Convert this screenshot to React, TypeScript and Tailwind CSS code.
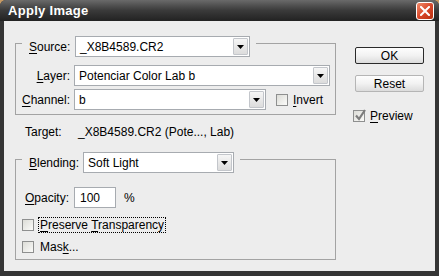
import type { ReactNode } from "react";

const FONT = "font-['Liberation_Sans',Arial,sans-serif]";

function Combo({ value, width }: { value: string; width: string }) {
  return (
    <div className={`flex h-[21px] items-stretch border border-[#a7abb0] bg-white ${width}`}>
      <div className="flex flex-1 items-center overflow-hidden whitespace-nowrap pl-[4px] text-[12px] text-black">
        {value}
      </div>
      <div className="m-[1px] flex w-[15px] items-center justify-center rounded-[1px] border border-[#c3c6cb] bg-gradient-to-b from-[#f6f6f6] to-[#dcdcdc]">
        <svg width="7" height="4" viewBox="0 0 7 4">
          <path d="M0 0h7L3.5 4z" fill="#000" />
        </svg>
      </div>
    </div>
  );
}

function Check({ checked = false }: { checked?: boolean }) {
  return (
    <div className="relative h-[12px] w-[12px] shrink-0 border border-[#8e8f8f] bg-gradient-to-br from-[#dcdcd7] to-[#fbfbf9]">
      {checked && (
        <svg className="absolute left-[0px] top-[-2px]" width="12" height="13" viewBox="0 0 12 13">
          <path d="M2 6.5l3 3.5L11 1" stroke="#7d7d7d" strokeWidth="2.2" fill="none" />
        </svg>
      )}
    </div>
  );
}

function U({ children }: { children: ReactNode }) {
  return <span className="underline underline-offset-[2px]">{children}</span>;
}

function Button({ children, primary = false }: { children: ReactNode; primary?: boolean }) {
  return (
    <div
      className={`flex h-[17px] w-[69px] items-center justify-center rounded-[2px] border bg-gradient-to-b from-[#fdfdfd] via-[#f2f2f2] to-[#dcdcdc] text-[12px] text-black ${
        primary ? "border-[#2a2a2a]" : "border-[#b5b5b5]"
      }`}
    >
      {children}
    </div>
  );
}

export default function App() {
  return (
    <div className={`h-[276px] w-[439px] bg-[#c79a63] ${FONT}`}>
      <div className="flex h-full flex-col overflow-hidden rounded-t-[6px] bg-[#353535]">
        {/* title bar */}
        <div className="flex h-[21px] shrink-0 items-center justify-between bg-gradient-to-b from-[#6a6a6a] via-[#3a3a3a] to-[#222222] pl-[8px] pr-[5px]">
          <span className="text-[13px] font-bold tracking-[0.3px] text-white">Apply Image</span>
          <div className="flex h-[18px] w-[18px] items-center justify-center rounded-[3px] border border-white bg-gradient-to-br from-[#f08a6a] via-[#d9472a] to-[#b8300f]">
            <svg width="10" height="10" viewBox="0 0 10 10">
              <path d="M1 1l8 8M9 1l-8 8" stroke="#fff" strokeWidth="2" strokeLinecap="square" />
            </svg>
          </div>
        </div>

        {/* body */}
        <div className="mx-[4px] mb-[5px] flex flex-1 bg-[#ededed] pl-[11px] pt-[15px] text-[12px] text-black">
          {/* left column */}
          <div className="flex w-[321px] flex-col">
            {/* group 1 */}
            <div className="mt-[7px] flex h-[72px] flex-col border border-[#a3a3a3]">
              <div className="-mt-[8px] ml-[6px] flex w-fit items-center bg-[#ededed] pl-[7px] pr-[6px]">
                <span className="w-[46px]">
                  <U>S</U>ource:
                </span>
                <Combo value="_X8B4589.CR2" width="w-[175px]" />
              </div>
              <div className="mt-[8px] flex items-center">
                <span className="w-[54px] text-right">
                  <U>L</U>ayer:
                </span>
                <div className="ml-[4px]">
                  <Combo value="Potenciar Color Lab b" width="w-[256px]" />
                </div>
              </div>
              <div className="mt-[3px] flex items-center">
                <span className="w-[54px] text-right">
                  <U>C</U>hannel:
                </span>
                <div className="ml-[4px]">
                  <Combo value="b" width="w-[192px]" />
                </div>
                <div className="ml-[10px] flex items-center gap-[5px]">
                  <Check />
                  <span>
                    <U>I</U>nvert
                  </span>
                </div>
              </div>
            </div>

            {/* target */}
            <div className="mt-[10px] flex h-[14px] items-center">
              <span className="ml-[10px] w-[53px]">Target:</span>
              <span>_X8B4589.CR2 (Pote..., Lab)</span>
            </div>

            {/* group 2 */}
            <div className="mt-[20px] flex h-[101px] flex-col border border-[#a3a3a3]">
              <div className="-mt-[8px] ml-[6px] flex w-fit items-center bg-[#ededed] pl-[7px] pr-[6px]">
                <span className="w-[54px]">
                  <U>B</U>lending:
                </span>
                <Combo value="Soft Light" width="w-[151px]" />
              </div>
              <div className="mt-[14px] flex items-center">
                <span className="ml-[9px] w-[49px]">
                  <U>O</U>pacity:
                </span>
                <div className="flex h-[21px] w-[42px] items-center border border-[#a7abb0] bg-white pl-[5px]">
                  100
                </div>
                <span className="ml-[8px]">%</span>
              </div>
              <div className="mt-[9px] flex items-center">
                <div className="ml-[6px]">
                  <Check />
                </div>
                <span className="ml-[4px] border border-dotted border-black px-[1px] leading-[14px]">
                  <U>P</U>reserve <U>T</U>ransparency
                </span>
              </div>
              <div className="mt-[5px] flex items-center">
                <div className="ml-[6px]">
                  <Check />
                </div>
                <span className="ml-[6px]">
                  Mas<U>k</U>...
                </span>
              </div>
            </div>
          </div>

          {/* right column */}
          <div className="ml-[19px] mt-[11px] flex flex-col">
            <Button primary>OK</Button>
            <div className="mt-[11px]">
              <Button>Reset</Button>
            </div>
            <div className="ml-[-2px] mt-[15px] flex items-center gap-[5px]">
              <Check checked />
              <span>
                <U>P</U>review
              </span>
            </div>
          </div>
        </div>
      </div>
    </div>
  );
}
